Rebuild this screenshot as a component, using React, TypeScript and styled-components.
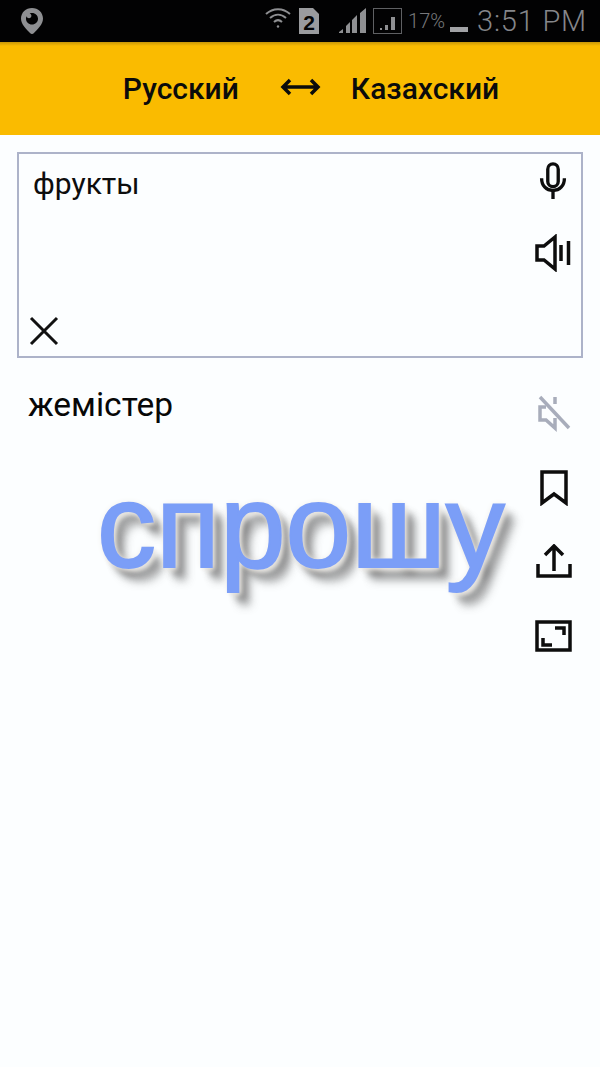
import styled, { createGlobalStyle } from 'styled-components';

const GlobalStyle = createGlobalStyle`
  html, body {
    margin: 0;
    padding: 0;
    background: #fcfeff;
  }
  body {
    font-family: Roboto, "Liberation Sans", sans-serif;
  }
`;

const Screen = styled.div`
  position: relative;
  width: 600px;
  height: 1067px;
  overflow: hidden;
  background: #fcfeff;
`;

const StatusBar = styled.div`
  height: 42px;
  background: #020203;
  display: flex;
  align-items: center;
  padding: 0 13px 0 21px;
  color: #8e8f92;
`;

const StatusRight = styled.div`
  margin-left: auto;
  display: flex;
  align-items: center;
`;

const Battery = styled.span`
  font-size: 20px;
  font-weight: 300;
  margin-left: 5px;
  color: #77787b;
`;

const Clock = styled.span`
  font-size: 29px;
  font-weight: 300;
  letter-spacing: 0.8px;
  margin-left: 9px;
  color: #85868a;
`;

const Header = styled.header`
  height: 93px;
  background: linear-gradient(#c79608 0, #fabb00 4px);
  display: flex;
  align-items: center;
  justify-content: center;
  padding-left: 22px;
  box-sizing: border-box;
  color: #0b0b0b;
  font-size: 30px;
  font-weight: 500;
`;

const Swap = styled.svg`
  margin: 0 30px 4px 41px;
`;

const Content = styled.main`
  padding: 17px 17px 0;
`;

const InputBox = styled.section`
  height: 206px;
  box-sizing: border-box;
  border: 2px solid #adb3c9;
  padding: 12px 14px 9px 14px;
  display: flex;
  justify-content: space-between;
`;

const InputLeft = styled.div`
  display: flex;
  flex-direction: column;
  justify-content: space-between;
  align-items: flex-start;
`;

const SourceText = styled.div`
  font-size: 30px;
  line-height: 36px;
  color: #0d0d0d;
`;

const ClearIcon = styled.svg`
  margin-left: -5px;
  display: block;
`;

const IconColumn = styled.div<{ $gap: number }>`
  display: flex;
  flex-direction: column;
  align-items: center;
  gap: ${(props) => props.$gap}px;
`;

const InputIcons = styled(IconColumn)`
  margin-top: -4px;
  margin-right: -4px;
`;

const Result = styled.section`
  display: flex;
  justify-content: space-between;
  padding: 27px 11px 0 11px;
`;

const ResultText = styled.div`
  font-size: 33.5px;
  line-height: 40px;
  color: #070707;
`;

const ResultIcons = styled(IconColumn)`
  margin-top: 9px;
`;

const ExpandIcon = styled.svg`
  margin-top: 4px;
`;

const Watermark = styled.div`
  position: absolute;
  left: 97px;
  top: 451px;
  font-family: "Liberation Sans", Arial, sans-serif;
  font-size: 118px;
  line-height: 150px;
  color: #7b9ef7;
  -webkit-text-stroke: 2px #7b9ef7;
  text-shadow:
    0 0 6px #efece6,
    3px 3px 5px #e2dfda,
    8px 9px 7px rgba(60, 60, 60, 0.45),
    12px 14px 9px rgba(70, 70, 70, 0.38);
`;

function App() {
  return (
    <Screen>
      <GlobalStyle />
      <StatusBar>
        <svg width="22" height="26" viewBox="0 0 22 26">
          <path
            fillRule="evenodd"
            fill="#8e8f92"
            d="M11 0C4.8 0 0 4.6 0 10.6c0 6 5.4 10.6 9 14.4 1.2 1.2 2.8 1.2 4 0 3.6-3.8 9-8.4 9-14.4C22 4.6 17.2 0 11 0zM11 5c3.4 0 6 2.6 6 5.8s-2.6 5.8-6 5.8-6-2.6-6-5.8c0-1 .2-1.8.6-2.6.3 1.2 1.2 2 2.4 2 1.4 0 2.4-1 2.4-2.4 0-1.2-.8-2.2-1.8-2.4C9.400 5.200 10.200 5 11 5z"
          />
        </svg>
        <StatusRight>
          <svg width="26" height="22" viewBox="0 0 26 22" fill="none" stroke="#8e8f92" strokeWidth="2" style={{ marginBottom: 6 }}>
            <path d="M1 7c7-6.500 17-6.500 24 0" />
            <path d="M5 11c5-4.500 11-4.500 16 0" />
            <path d="M9 15c2.500-2.300 5.500-2.300 8 0" />
            <circle cx="13" cy="19.500" r="1.200" fill="#8e8f92" stroke="none" />
          </svg>
          <svg width="22" height="26" viewBox="0 0 22 26" style={{ marginLeft: 7 }}>
            <path d="M1 0h14l6 6v20H1z" fill="#9a9b9e" />
            <text x="11" y="22" textAnchor="middle" fontFamily="Liberation Sans" fontWeight="700" fontSize="21" fill="#050505">
              2
            </text>
          </svg>
          <svg width="28" height="26" viewBox="0 0 28 26" style={{ marginLeft: 19 }} fill="#8e8f92">
            <path d="M0 24 4 21v4H0zM7 18l4-4v11H7zM13 12l5-5v18h-5zM21 5l6-5v25h-6z" />
          </svg>
          <svg width="30" height="27" viewBox="0 0 30 27" style={{ marginLeft: 6 }}>
            <rect x="0.500" y="0.500" width="28" height="25" fill="none" stroke="#5f6063" />
            <path d="M7 20h2v2H7zM12 17h3v5h-3zM18 9h4v13h-4z" fill="#8e8f92" />
          </svg>
          <Battery>17%</Battery>
          <svg width="18" height="6" viewBox="0 0 18 6" style={{ marginLeft: 5, marginTop: 18 }}>
            <rect width="18" height="5" fill="#a1a2a5" />
          </svg>
          <Clock>3:51 PM</Clock>
        </StatusRight>
      </StatusBar>
      <Header>
        <span>Русский</span>
        <Swap width="41" height="22" viewBox="0 0 41 22" fill="none" stroke="#0b0b0b" strokeWidth="3.500">
          <path d="M3 11h35M10 4l-7 7 7 7M31 4l7 7-7 7" />
        </Swap>
        <span>Казахский</span>
      </Header>
      <Content>
        <InputBox>
          <InputLeft>
            <SourceText>фрукты</SourceText>
            <ClearIcon width="32" height="32" viewBox="0 0 32 32" stroke="#111" strokeWidth="3" fill="none">
              <path d="M3 3l26 26M29 3L3 29" />
            </ClearIcon>
          </InputLeft>
          <InputIcons $gap={34}>
            <svg width="30" height="38" viewBox="0 0 30 40" fill="none" stroke="#0d0d0d" strokeWidth="3.500">
              <rect x="9.500" y="2" width="11" height="24" rx="5.500" />
              <path d="M3 17c0 8 5 13 12 13s12-5 12-13M15 30v9" />
            </svg>
            <svg width="36" height="38" viewBox="0 0 36 38" fill="none" stroke="#0d0d0d" strokeWidth="3.500">
              <path d="M20 3 9 12H2v14h7l11 9z" />
              <path d="M26 11v16M33.500 7v24" />
            </svg>
          </InputIcons>
        </InputBox>
        <Result>
          <ResultText>жемістер</ResultText>
          <ResultIcons $gap={38}>
            <svg width="34" height="38" viewBox="0 0 34 38" fill="none" stroke="#a8adbb" strokeWidth="3.500">
              <path d="M18 3v7M18 24v10L9 26H3V13h6" />
              <path d="M3 3l29 31" />
            </svg>
            <svg width="28" height="36" viewBox="0 0 28 36" fill="none" stroke="#0d0d0d" strokeWidth="3.500">
              <path d="M2 2h24v31L14 24 2 33z" />
            </svg>
            <svg width="36" height="34" viewBox="0 0 36 34" fill="none" stroke="#0d0d0d" strokeWidth="3.500">
              <path d="M18 3v24M9 11l9-9 9 9M2 20v12h32V20" />
            </svg>
            <ExpandIcon width="37" height="32" viewBox="0 0 37 32" fill="none" stroke="#0d0d0d" strokeWidth="3.500">
              <rect x="2" y="2" width="33" height="28" />
              <path d="M8 18v7h9M20 8h9v7" />
            </ExpandIcon>
          </ResultIcons>
        </Result>
      </Content>
      <Watermark>спрошу</Watermark>
    </Screen>
  );
}

export default App;
